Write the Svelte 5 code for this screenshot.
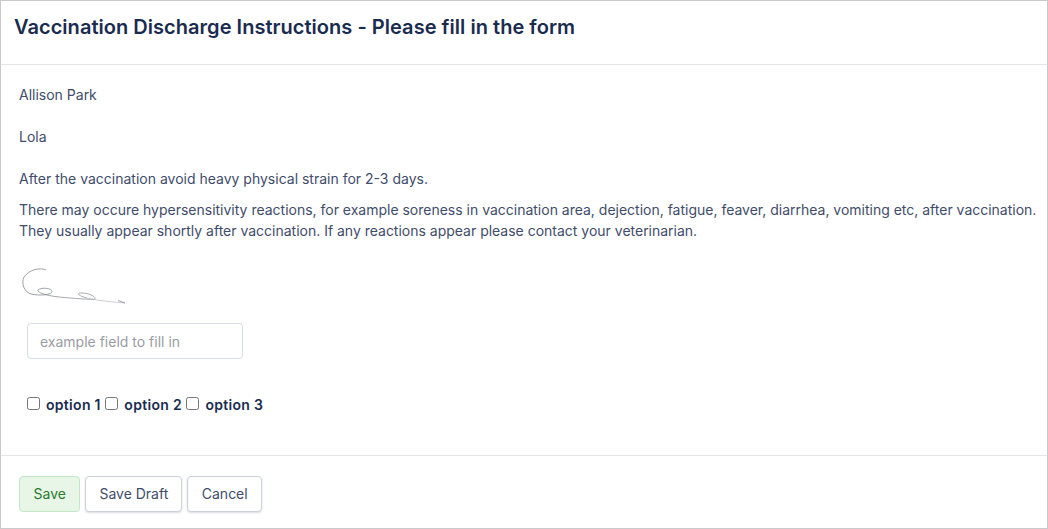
<script lang="ts">
	const options = ['option 1', 'option 2', 'option 3'];
</script>

<div class="card">
	<header class="card-header">
		<h1>Vaccination Discharge Instructions - Please fill in the form</h1>
	</header>

	<main class="card-body">
		<p class="line">Allison Park</p>
		<p class="line">Lola</p>
		<p class="line">After the vaccination avoid heavy physical strain for 2-3 days.</p>
		<p class="para">
			There may occure hypersensitivity reactions, for example soreness in vaccination area, dejection, fatigue, feaver, diarrhea, vomiting etc, after vaccination. They usually appear shortly after vaccination. If any reactions appear please contact your veterinarian.
		</p>

		<svg class="signature" width="112" height="40" viewBox="0 0 112 40" fill="none" aria-hidden="true">
			<path d="M27 5C20 2 10 5 5 12C2 18 5 27 12 29C20 31 33 30 33 26.500C33 23 22 22 19 25C18 28 30 31 40 32" stroke="#85898f" stroke-width="0.8" />
			<path d="M40 32C50 33 62 34 75 34.500C79 33 71 28 63 28C56 28 60 31 68 33" stroke="#93979d" stroke-width="0.8" />
			<path d="M68 33C80 36 95 37 106 38" stroke="#b4b8bd" stroke-width="0.7" />
			<path d="M99 35.500L106 38" stroke="#85898f" stroke-width="0.8" />
		</svg>

		<input class="field" type="text" placeholder="example field to fill in" />

		<div class="options">
			{#each options as option}
				<label class="option">
					<input type="checkbox" />
					<span>{option}</span>
				</label>
			{/each}
		</div>
	</main>

	<footer class="card-footer">
		<button class="btn btn-save">Save</button>
		<button class="btn">Save Draft</button>
		<button class="btn btn-cancel">Cancel</button>
	</footer>
</div>

<style>
	:global(body) {
		margin: 0;
		background: #fff;
		font-family: Inter, "Liberation Sans", sans-serif;
	}

	.card {
		box-sizing: border-box;
		width: 1048px;
		height: 529px;
		border: 1px solid #c9cacc;
		display: flex;
		flex-direction: column;
		color: #414c6b;
		font-size: 14px;
	}

	.card-header {
		box-sizing: border-box;
		height: 64px;
		padding: 13px 13px 0;
		border-bottom: 1px solid #e3e5e8;
	}

	h1 {
		margin: 0;
		font-size: 20px;
		line-height: 26px;
		font-weight: 600;
		letter-spacing: 0.035px;
		color: #1a2b50;
	}

	.card-body {
		flex: 1;
		padding: 19px 8px 0 18px;
	}

	.line {
		margin: 0 0 21px;
		line-height: 21px;
	}

	.line:nth-of-type(3) {
		margin-bottom: 10px;
	}

	.para {
		margin: 0;
		line-height: 21px;
		letter-spacing: -0.006px;
	}

	.signature {
		display: block;
		margin: 24px 0 0;
	}

	.field {
		display: block;
		box-sizing: border-box;
		width: 216px;
		height: 36px;
		margin: 18px 0 0 8px;
		padding: 0 12px;
		border: 1px solid #d8dce3;
		border-radius: 4px;
		background: #fff;
		font: inherit;
		color: #414c6b;
	}

	.field::placeholder {
		color: #9a9ca3;
		opacity: 1;
	}

	.options {
		display: flex;
		gap: 4.500px;
		margin: 36px 0 0 8px;
	}

	.option {
		display: flex;
		align-items: flex-start;
		font-weight: 600;
		letter-spacing: 0.3px;
		color: #1a2b50;
		line-height: 20px;
	}

	.option input {
		width: 13px;
		height: 13px;
		margin: 2px 6px 0 0;
	}

	.card-footer {
		box-sizing: border-box;
		height: 73px;
		border-top: 1px solid #e3e5e8;
		display: flex;
		gap: 5px;
		padding: 20px 0 0 18px;
	}

	.btn {
		box-sizing: border-box;
		height: 36px;
		padding: 0 13px 2px;
		border: 1px solid #ccd1dc;
		border-radius: 4px;
		background: #fff;
		box-shadow: 0 1px 2px rgba(50, 60, 90, 0.18);
		font: inherit;
		color: #414c6b;
	}

	.btn-save {
		padding: 0 13.500px 2px;
		background: #e7f6e7;
		border-color: #c3e6c8;
		box-shadow: none;
		color: #2b7a2f;
	}

	.btn-cancel {
		padding: 0 13.500px 2px;
	}
</style>
